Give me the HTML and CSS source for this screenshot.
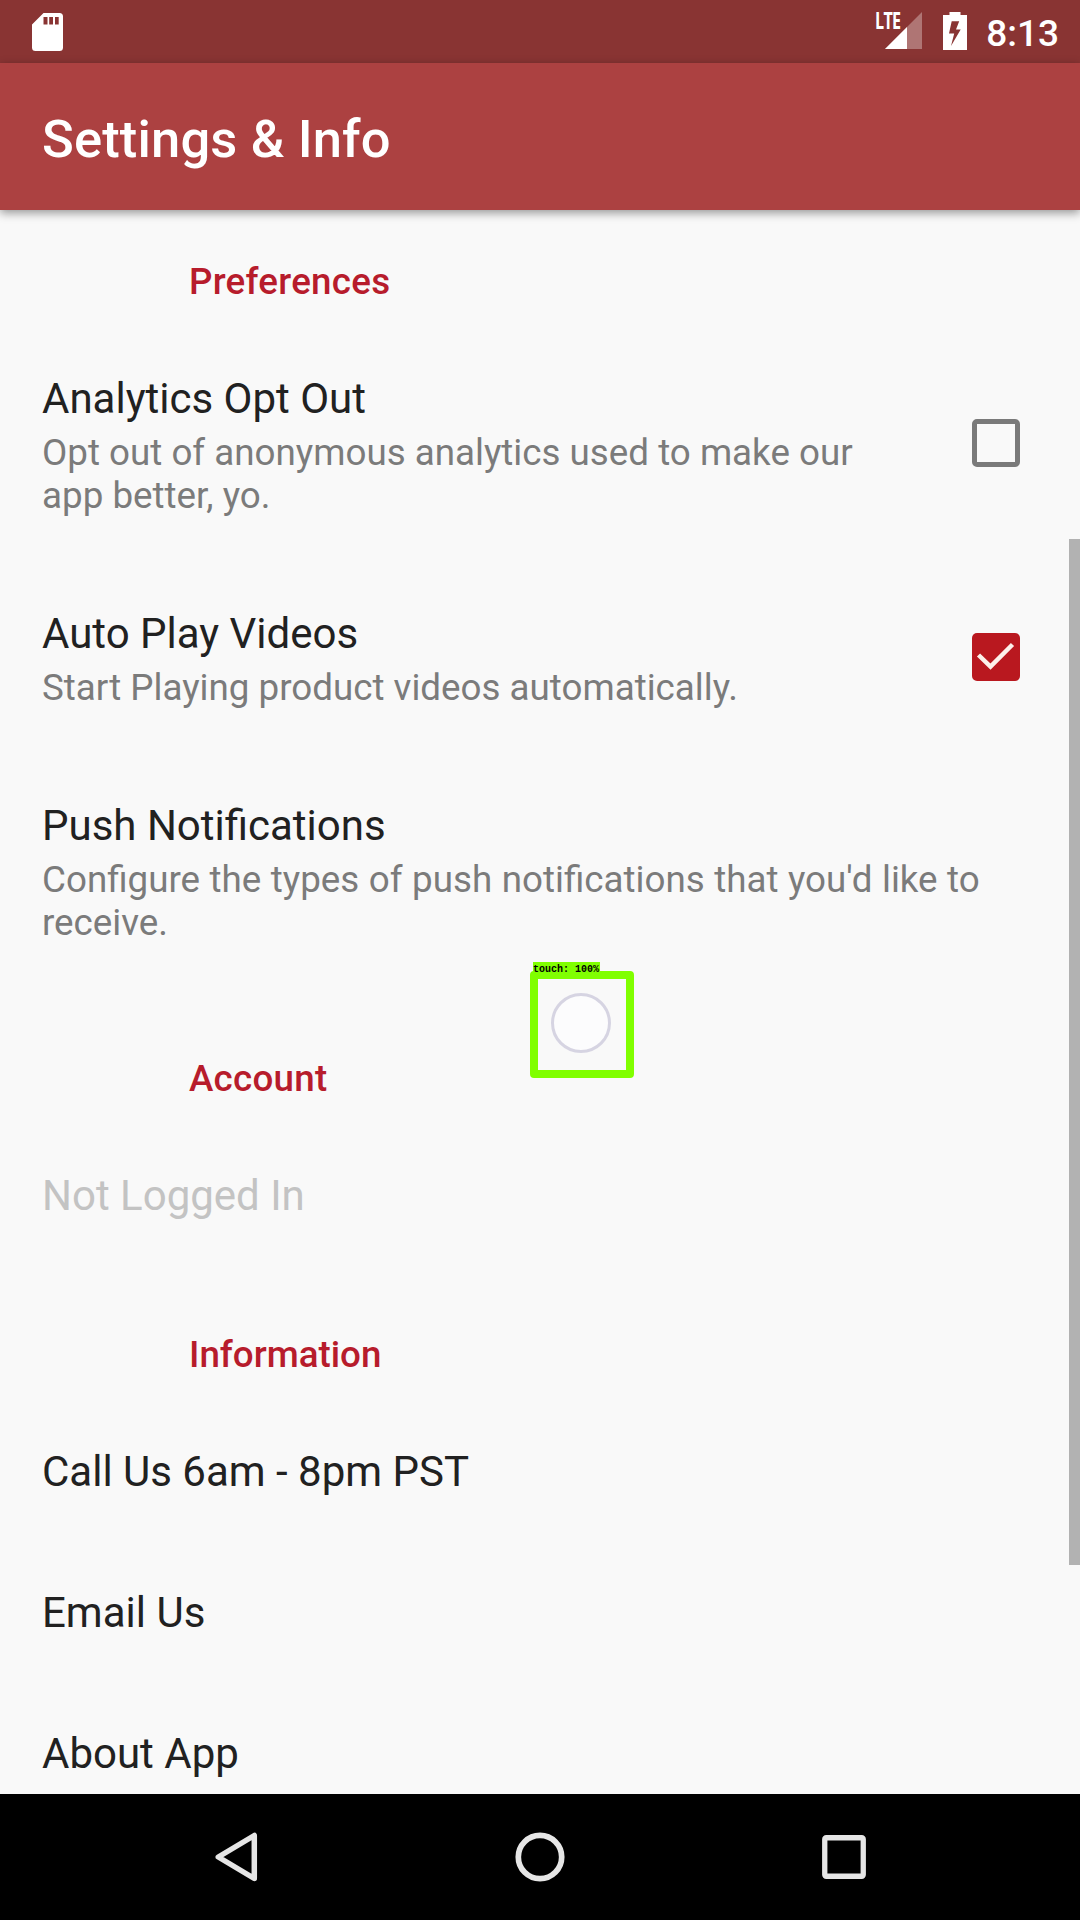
FILE: index.html
```html
<!DOCTYPE html>
<html lang="en">
<head>
<meta charset="utf-8">
<title>Settings &amp; Info</title>
<link rel="stylesheet" href="styles.css">
</head>
<body>
<div class="screen">
  <div class="status-bar">
    <svg class="sd-icon" width="31" height="38" viewBox="0 0 31 38"><path fill="#fff" fill-rule="evenodd" d="M11.5 0H27.5a3.5 3.5 0 0 1 3.5 3.5V34.5a3.5 3.5 0 0 1-3.500 3.500H3.500A3.500 3.500 0 0 1 0 34.500V11.500ZM11.500 4V11.500H15.500V4ZM17.200 4V11.500H21V4ZM23 4V11.500H26.700V4Z"/></svg>
    <div class="status-icons">
      <div class="signal">
        <svg width="37" height="37" viewBox="0 0 37 37"><path d="M37 0V37H0Z" fill="#fff" fill-opacity=".32"/><path d="M22 15V37H0Z" fill="#fff"/></svg>
        <span class="lte">LTE</span>
      </div>
      <svg class="battery" width="24" height="38" viewBox="0 0 24 38"><path fill="#fff" fill-rule="evenodd" d="M6.500 0H17.500V3H24V38H0V3H6.500ZM8.700 9.300 6 21.500H11.200L8 34 17.700 17.500H13L16.200 9.300Z"/></svg>
      <span class="clock">8:13</span>
    </div>
  </div>
  <header class="toolbar"><h1 class="toolbar-title">Settings &amp; Info</h1></header>
  <main class="settings">
    <h2 class="category first">Preferences</h2>
    <div class="item">
      <div class="item-text">
        <div class="item-title">Analytics Opt Out</div>
        <div class="item-summary">Opt out of anonymous analytics used to make our<br>app better, yo.</div>
      </div>
      <span class="checkbox"></span>
    </div>
    <div class="item">
      <div class="item-text">
        <div class="item-title">Auto Play Videos</div>
        <div class="item-summary">Start Playing product videos automatically.</div>
      </div>
      <span class="checkbox checked"><svg width="48" height="48" viewBox="0 0 48 48"><path d="M6.500 22 18.500 33.500 40.500 11.500" fill="none" stroke="#fdf0ea" stroke-width="4.500"/></svg></span>
    </div>
    <div class="item">
      <div class="item-text">
        <div class="item-title">Push Notifications</div>
        <div class="item-summary wide">Configure the types of push notifications that you'd like to<br>receive.</div>
      </div>
    </div>
    <h2 class="category">Account</h2>
    <div class="item disabled"><div class="item-title">Not Logged In</div></div>
    <h2 class="category last">Information</h2>
    <div class="item"><div class="item-title">Call Us 6am - 8pm PST</div></div>
    <div class="item"><div class="item-title">Email Us</div></div>
    <div class="item"><div class="item-title">About App</div></div>
  </main>
  <nav class="nav-bar">
    <svg width="44" height="52" viewBox="0 0 44 52"><path d="M40.300 4.500V47.500L4.300 26Z" fill="none" stroke="#e6e6e6" stroke-width="5.500" stroke-linejoin="round"/></svg>
    <svg width="50" height="50" viewBox="0 0 50 50"><circle cx="25" cy="25" r="21.700" fill="none" stroke="#e6e6e6" stroke-width="5.700"/></svg>
    <svg width="44" height="44" viewBox="0 0 44 44"><rect x="2.750" y="2.750" width="38.500" height="38.500" rx="1.500" fill="none" stroke="#e6e6e6" stroke-width="5.300"/></svg>
  </nav>
  <div class="scrollbar"></div>
  <div class="touch">
    <span class="touch-label">touch: 100%</span>
    <div class="touch-box"><span class="touch-dot"></span></div>
  </div>
</div>
</body>
</html>
```
FILE: styles.css
```css
* { box-sizing: border-box; }
body { margin: 0; background: #f9f9f9; font-family: Roboto, sans-serif; }
.screen { position: relative; width: 1080px; height: 1920px; overflow: hidden; display: flex; flex-direction: column; }
svg { display: block; }

.status-bar { flex: none; height: 63px; background: #893433; display: flex; justify-content: space-between; align-items: flex-start; padding: 0 21px 0 32px; color: #fff; }
.sd-icon { margin-top: 13px; }
.status-icons { display: flex; align-items: flex-start; }
.signal { position: relative; margin: 12px 21px 0 0; }
.lte { position: absolute; left: -10px; top: -4px; font: 700 23px/24px "Open Sans", sans-serif; letter-spacing: -1px; transform: scaleX(.7); transform-origin: 0 0; }
.battery { margin: 12px 19px 0 0; }
.clock { font-size: 37px; font-weight: 500; line-height: 43px; margin-top: 12px; }

.toolbar { flex: none; position: relative; z-index: 1; height: 147px; background: #ac4141; display: flex; align-items: center; padding: 4px 42px 0; box-shadow: 0 3px 9px rgba(0, 0, 0, .4); }
.toolbar-title { margin: 0; color: #fff; font-size: 52.5px; font-weight: 500; line-height: 62px; letter-spacing: .15px; }

.settings { flex: 1; min-height: 0; overflow: hidden; }
.category { margin: 0; padding: 71px 0 21px 189px; font-size: 36.75px; font-weight: 500; line-height: 43px; letter-spacing: .25px; color: #b71c2c; }
.category.first { padding-top: 50px; }
.category.last { letter-spacing: 0; }
.item { display: flex; align-items: center; justify-content: space-between; padding: 50px 60px 42px 42px; }
.item-title { font-size: 42px; line-height: 49px; color: #212121; white-space: nowrap; }
.item-summary { margin-top: 8px; font-size: 36.75px; line-height: 43px; color: #7b7b7b; white-space: nowrap; }
.item-summary.wide { word-spacing: .4px; }
.disabled .item-title { color: #c3c3c3; }
.checkbox { flex: none; width: 48px; height: 48px; border: 5px solid #7a7a7a; border-radius: 5px; margin-top: -5px; }
.checkbox.checked { border: 0; background: #b9181f; }

.nav-bar { flex: none; height: 126px; background: #000; display: flex; justify-content: space-between; align-items: center; padding: 0 214px; }

.scrollbar { position: absolute; right: 0; top: 539px; width: 11px; height: 1026px; background: #b2b2b2; }
.touch { position: absolute; left: 530px; top: 962px; z-index: 2; }
.touch-label { position: absolute; left: 3px; top: 0; width: 67px; height: 13px; background: #80ff00; color: #000; font: 700 10px/15px "Liberation Mono", monospace; white-space: nowrap; z-index: 1; }
.touch-box { width: 104px; height: 107px; margin-top: 9px; border: 8px solid #80ff00; border-radius: 4px; display: flex; align-items: center; justify-content: center; }
.touch-dot { width: 60px; height: 60px; border: 3px solid #d6d4e2; border-radius: 50%; background: #fcfcfd; margin: 0 2px 4px 0; }
```
